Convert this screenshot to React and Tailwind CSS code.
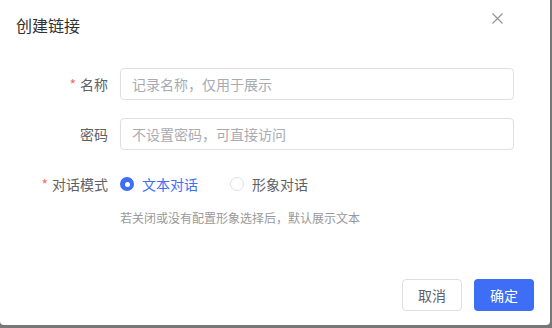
const font = { fontFamily: '"Noto Sans CJK SC", "Noto Sans", sans-serif' };

const FormRow = ({ label, required, children }) => (
    <div className="flex h-8 items-center">
        <label className="w-[108px] text-right text-sm text-[#606266]">
            {required && <span className="mr-1 text-[#f56c6c]">*</span>}
            {label}
        </label>
        <div className="ml-3 flex h-full w-[394px] items-center">{children}</div>
    </div>
);

const Radio = ({ checked, label }) => (
    <div className="mr-[32px] flex items-center">
        {checked ? (
            <span className="flex h-[14px] w-[14px] items-center justify-center rounded-full bg-[#3e6ef5]">
                <span className="h-[5px] w-[5px] rounded-full bg-white" />
            </span>
        ) : (
            <span className="h-[14px] w-[14px] rounded-full border border-[#dcdfe6] bg-white" />
        )}
        <span className={`ml-2 text-sm ${checked ? 'text-[#3e6ef5]' : 'text-[#606266]'}`}>{label}</span>
    </div>
);

export default function App() {
    return (
        <div className="h-[328px] w-[552px] bg-[#777777]" style={font}>
            <div className="flex h-[325px] w-[550px] flex-col rounded-b-[4px] bg-white">
                <div className="flex items-start justify-between pl-4 pr-[47px] pt-[13px]">
                    <h2 className="text-base leading-6 text-[#303133]">创建链接</h2>
                    <svg width="11" height="11" viewBox="0 0 11 11" className="mt-0">
                        <path d="M0.5 0.5 L10.5 10.5 M10.5 0.5 L0.5 10.5" stroke="#909399" strokeWidth="1.1" />
                    </svg>
                </div>

                <div className="mt-[31px] flex flex-col">
                    <FormRow label="名称" required>
                        <input
                            className="h-8 w-full rounded-[4px] border border-[#dcdfe6] px-[11px] text-sm text-[#606266] placeholder:text-[#a8abb2] focus:outline-none"
                            placeholder="记录名称，仅用于展示"
                        />
                    </FormRow>
                    <div className="h-[18px]" />
                    <FormRow label="密码">
                        <input
                            className="h-8 w-full rounded-[4px] border border-[#dcdfe6] px-[11px] text-sm text-[#606266] placeholder:text-[#a8abb2] focus:outline-none"
                            placeholder="不设置密码，可直接访问"
                        />
                    </FormRow>
                    <div className="h-[18px]" />
                    <FormRow label="对话模式" required>
                        <Radio checked label="文本对话" />
                        <Radio label="形象对话" />
                    </FormRow>
                    <p className="ml-[120px] mt-2 text-xs leading-5 text-[#999999]">
                        若关闭或没有配置形象选择后，默认展示文本
                    </p>
                </div>

                <div className="mt-auto flex justify-end gap-3 pb-[14px] pr-4">
                    <button className="h-8 w-[60px] rounded-[4px] border border-[#dcdfe6] bg-white text-sm text-[#606266]">
                        取消
                    </button>
                    <button className="h-8 w-[60px] rounded-[4px] bg-[#3e6ef5] text-sm text-white">
                        确定
                    </button>
                </div>
            </div>
        </div>
    );
}
